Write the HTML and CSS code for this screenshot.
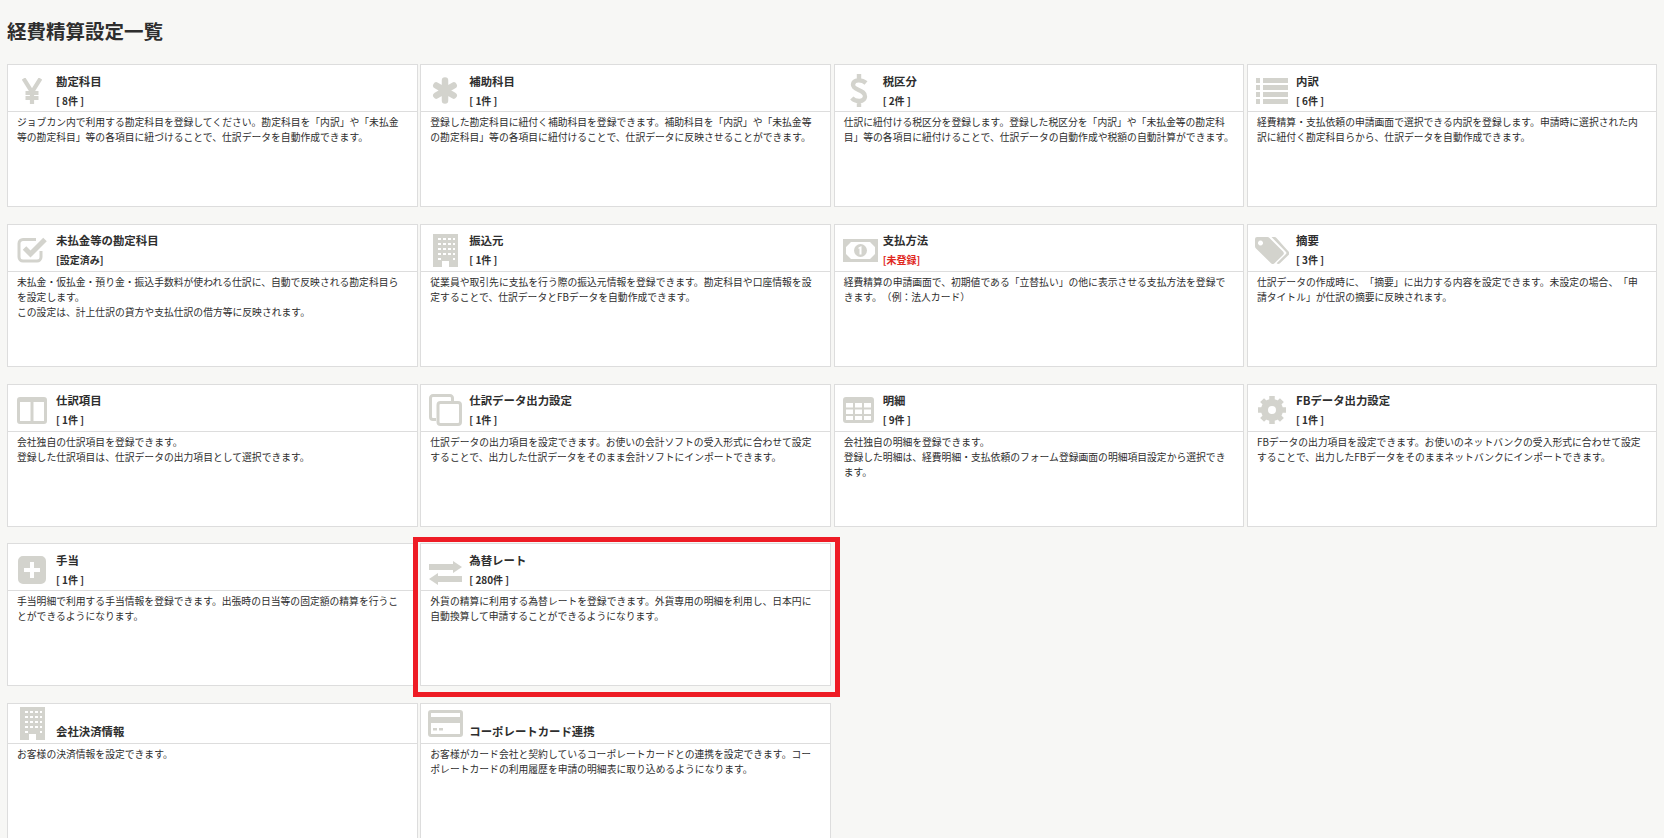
FILE: index.html
```html
<!DOCTYPE html>
<html lang="ja">
<head>
  <meta charset="UTF-8" />
  <title>経費精算設定一覧</title>
  <link rel="stylesheet" href="styles.css">
</head>
<body>
  <h1>経費精算設定一覧</h1>

  <div class="grid">
    <div class="card">
      <div class="card-head">
        <div class="ico">
          <svg width="20" height="26" viewBox="0 0 20 26"><path class="line" d="M1.500 0.500l8.500 13.500 8.500-13.500M10 13v13M3.500 15h13M3.500 20h13" stroke-width="4.200"/></svg>
        </div>
        <div>
          <div class="name">勘定科目</div>
          <div class="count">[ 8件 ]</div>
        </div>
      </div>
      <p class="desc">ジョブカン内で利用する勘定科目を登録してください。勘定科目を「内訳」や「未払金等の勘定科目」等の各項目に紐づけることで、仕訳データを自動作成できます。</p>
    </div>

    <div class="card">
      <div class="card-head">
        <div class="ico">
          <svg width="26" height="27" viewBox="0 0 26 27"><path class="line round" d="M13 3.500v20M4.300 8.500l17.400 10M21.700 8.500l-17.400 10" stroke-width="6.500"/></svg>
        </div>
        <div>
          <div class="name">補助科目</div>
          <div class="count">[ 1件 ]</div>
        </div>
      </div>
      <p class="desc">登録した勘定科目に紐付く補助科目を登録できます。補助科目を「内訳」や「未払金等の勘定科目」等の各項目に紐付けることで、仕訳データに反映させることができます。</p>
    </div>

    <div class="card">
      <div class="card-head">
        <div class="ico">
          <svg width="18" height="33" viewBox="0 0 18 33"><path class="line" d="M16 9C12 5.500 3.500 5 3 10.500C2.500 16.500 15.500 15.500 15 22.500C14.500 28.500 5.500 28 1.800 24M9 0v6M9 27v6" stroke-width="4.400"/></svg>
        </div>
        <div>
          <div class="name">税区分</div>
          <div class="count">[ 2件 ]</div>
        </div>
      </div>
      <p class="desc">仕訳に紐付ける税区分を登録します。登録した税区分を「内訳」や「未払金等の勘定科目」等の各項目に紐付けることで、仕訳データの自動作成や税額の自動計算ができます。</p>
    </div>

    <div class="card">
      <div class="card-head">
        <div class="ico">
          <svg width="32" height="26" viewBox="0 0 32 26"><path class="fill" d="M0 0h4v5H0zM7 0h25v5H7zM0 7h4v5H0zM7 7h25v5H7zM0 14h4v5H0zM7 14h25v5H7zM0 21h4v5H0zM7 21h25v5H7z"/></svg>
        </div>
        <div>
          <div class="name">内訳</div>
          <div class="count">[ 6件 ]</div>
        </div>
      </div>
      <p class="desc">経費精算・支払依頼の申請画面で選択できる内訳を登録します。申請時に選択された内訳に紐付く勘定科目らから、仕訳データを自動作成できます。</p>
    </div>

    <div class="card">
      <div class="card-head">
        <div class="ico">
          <svg width="31" height="26" viewBox="0 0 31 26"><path class="line" d="M19 2.500H6A4 4 0 0 0 2 6.500V20A4 4 0 0 0 6 24H20A4 4 0 0 0 24 20V14" stroke-width="3"/><path class="line" d="M7.500 11l6 6L28 2.500" stroke-width="5"/></svg>
        </div>
        <div>
          <div class="name">未払金等の勘定科目</div>
          <div class="count">[設定済み]</div>
        </div>
      </div>
      <p class="desc">未払金・仮払金・預り金・振込手数料が使われる仕訳に、自動で反映される勘定科目らを設定します。<br>この設定は、計上仕訳の貸方や支払仕訳の借方等に反映されます。</p>
    </div>

    <div class="card">
      <div class="card-head">
        <div class="ico">
          <svg width="25" height="33" viewBox="0 0 25 33"><path class="fill" fill-rule="evenodd" d="M0 0h25v33H0zM5 4v2h3V4zM10 4v2h3V4zM15 4v2h3V4zM20 4v2h2V4zM5 9v2h3V9zM10 9v2h3V9zM15 9v2h3V9zM20 9v2h2V9zM5 14v2h3v-2zM10 14v2h3v-2zM15 14v2h3v-2zM20 14v2h2v-2zM5 19v2h3v-2zM10 19v2h3v-2zM15 19v2h3v-2zM20 19v2h2v-2zM5 24v2h3v-2zM20 24v2h2v-2zM9 27v6h7v-6z"/></svg>
        </div>
        <div>
          <div class="name">振込元</div>
          <div class="count">[ 1件 ]</div>
        </div>
      </div>
      <p class="desc">従業員や取引先に支払を行う際の振込元情報を登録できます。勘定科目や口座情報を設定することで、仕訳データとFBデータを自動作成できます。</p>
    </div>

    <div class="card">
      <div class="card-head">
        <div class="ico">
          <svg class="nudge-right" width="35" height="23" viewBox="0 0 35 23"><path class="fill" fill-rule="evenodd" d="M0 0h35v23H0zM8 3L3 8v7l5 5h19l5-5V8l-5-5z"/><circle class="fill" cx="17.500" cy="11.500" r="6.500"/><path class="mark" d="M15.500 8.500l3-1.500v8.500h-2V9.500l-1 .5z"/></svg>
        </div>
        <div>
          <div class="name">支払方法</div>
          <div class="count unset">[未登録]</div>
        </div>
      </div>
      <p class="desc spaced">経費精算の申請画面で、初期値である「立替払い」の他に表示させる支払方法を登録できます。（例：法人カード）</p>
    </div>

    <div class="card">
      <div class="card-head">
        <div class="ico">
          <svg width="34" height="27" viewBox="0 0 34 27"><path class="fill" fill-rule="evenodd" d="M2 0h10.500a3 3 0 0 1 2 .9L28 14.500a2.500 2.500 0 0 1 0 3.500l-8.500 8.200a2.500 2.500 0 0 1-3.500 0L1 11.500a3 3 0 0 1-1-2.200V2a2 2 0 0 1 2-2zM5.500 3.500a2.500 2.500 0 1 0 .01 0z"/><path class="fill" d="M16.500 0h3a3 3 0 0 1 2 .9L33.500 14.500a2.500 2.500 0 0 1 0 3.500l-8.500 8.200a2.500 2.500 0 0 1-3.400 0L31 17a1.500 1.500 0 0 0 0-2z"/></svg>
        </div>
        <div>
          <div class="name">摘要</div>
          <div class="count">[ 3件 ]</div>
        </div>
      </div>
      <p class="desc spaced">仕訳データの作成時に、「摘要」に出力する内容を設定できます。未設定の場合、「申請タイトル」が仕訳の摘要に反映されます。</p>
    </div>

    <div class="card">
      <div class="card-head">
        <div class="ico">
          <svg width="30" height="27" viewBox="0 0 30 27"><path class="fill" fill-rule="evenodd" d="M3 0h24a3 3 0 0 1 3 3v21a3 3 0 0 1-3 3H3a3 3 0 0 1-3-3V3a3 3 0 0 1 3-3zM3 5v19h10.500V5zM16.500 5v19H27V5z"/></svg>
        </div>
        <div>
          <div class="name">仕訳項目</div>
          <div class="count">[ 1件 ]</div>
        </div>
      </div>
      <p class="desc">会社独自の仕訳項目を登録できます。<br>登録した仕訳項目は、仕訳データの出力項目として選択できます。</p>
    </div>

    <div class="card">
      <div class="card-head">
        <div class="ico">
          <svg width="33" height="32" viewBox="0 0 33 32"><path class="line" d="M7 25.500H4A2.500 2.500 0 0 1 1.500 23V4A2.500 2.500 0 0 1 4 1.500H21A2.500 2.500 0 0 1 23.500 4V7" stroke-width="3"/><rect class="line" x="9" y="8.500" width="22.500" height="22" rx="2.500" stroke-width="3"/></svg>
        </div>
        <div>
          <div class="name">仕訳データ出力設定</div>
          <div class="count">[ 1件 ]</div>
        </div>
      </div>
      <p class="desc">仕訳データの出力項目を設定できます。お使いの会計ソフトの受入形式に合わせて設定することで、出力した仕訳データをそのまま会計ソフトにインポートできます。</p>
    </div>

    <div class="card">
      <div class="card-head">
        <div class="ico">
          <svg width="31" height="26" viewBox="0 0 31 26"><path class="fill" fill-rule="evenodd" d="M3 0h25a3 3 0 0 1 3 3v20a3 3 0 0 1-3 3H3a3 3 0 0 1-3-3V3a3 3 0 0 1 3-3zM3 6v4.500h7V6zM12 6v4.500h7V6zM21 6v4.500h7V6zM3 12.500V17h7v-4.500zM12 12.500V17h7v-4.500zM21 12.500V17h7v-4.500zM3 19v4h7v-4zM12 19v4h7v-4zM21 19v4h7v-4z"/></svg>
        </div>
        <div>
          <div class="name">明細</div>
          <div class="count">[ 9件 ]</div>
        </div>
      </div>
      <p class="desc">会社独自の明細を登録できます。<br>登録した明細は、経費明細・支払依頼のフォーム登録画面の明細項目設定から選択できます。</p>
    </div>

    <div class="card">
      <div class="card-head">
        <div class="ico">
          <svg width="28" height="28" viewBox="0 0 28 28"><circle class="line" cx="14" cy="14" r="7.500" stroke-width="7"/><path class="line" d="M14 0v6M14 22v6M0 14h6M22 14h6M4.100 4.100l4.200 4.200M19.700 19.700l4.200 4.200M23.900 4.100l-4.200 4.200M8.300 19.700l-4.200 4.200" stroke-width="5.500"/></svg>
        </div>
        <div>
          <div class="name">FBデータ出力設定</div>
          <div class="count">[ 1件 ]</div>
        </div>
      </div>
      <p class="desc">FBデータの出力項目を設定できます。お使いのネットバンクの受入形式に合わせて設定することで、出力したFBデータをそのままネットバンクにインポートできます。</p>
    </div>

    <div class="card">
      <div class="card-head">
        <div class="ico">
          <svg width="28" height="28" viewBox="0 0 28 28"><path class="fill" fill-rule="evenodd" d="M5 0h18a5 5 0 0 1 5 5v18a5 5 0 0 1-5 5H5a5 5 0 0 1-5-5V5a5 5 0 0 1 5-5zM12 6v6H6v4h6v6h4v-6h6v-4h-6V6z"/></svg>
        </div>
        <div>
          <div class="name">手当</div>
          <div class="count">[ 1件 ]</div>
        </div>
      </div>
      <p class="desc">手当明細で利用する手当情報を登録できます。出張時の日当等の固定額の精算を行うことができるようになります。</p>
    </div>

    <div class="card">
      <div class="card-head">
        <div class="ico">
          <svg class="nudge-low" width="33" height="24" viewBox="0 0 33 24"><path class="fill" d="M0 3h24V0l9 6-9 6V9H0zM33 15H9v-3l-9 6 9 6v-3h24z"/></svg>
        </div>
        <div>
          <div class="name">為替レート</div>
          <div class="count">[ 280件 ]</div>
        </div>
      </div>
      <p class="desc">外貨の精算に利用する為替レートを登録できます。外貨専用の明細を利用し、日本円に自動換算して申請することができるようになります。</p>
      <div class="redbox"></div>
    </div>

    <div class="spacer"></div>
    <div class="spacer"></div>

    <div class="card">
      <div class="card-head short">
        <div class="ico">
          <svg width="25" height="33" viewBox="0 0 25 33"><path class="fill" fill-rule="evenodd" d="M0 0h25v33H0zM5 4v2h3V4zM10 4v2h3V4zM15 4v2h3V4zM20 4v2h2V4zM5 9v2h3V9zM10 9v2h3V9zM15 9v2h3V9zM20 9v2h2V9zM5 14v2h3v-2zM10 14v2h3v-2zM15 14v2h3v-2zM20 14v2h2v-2zM5 19v2h3v-2zM10 19v2h3v-2zM15 19v2h3v-2zM20 19v2h2v-2zM5 24v2h3v-2zM20 24v2h2v-2zM9 27v6h7v-6z"/></svg>
        </div>
        <div class="name">会社決済情報</div>
      </div>
      <p class="desc">お客様の決済情報を設定できます。</p>
    </div>

    <div class="card">
      <div class="card-head short">
        <div class="ico">
          <svg width="35" height="27" viewBox="0 0 35 27"><path class="fill" fill-rule="evenodd" d="M3 0h29a3 3 0 0 1 3 3v21a3 3 0 0 1-3 3H3a3 3 0 0 1-3-3V3a3 3 0 0 1 3-3zM3 3v4h29V3zM3 13v11h29V13zM5 18h4v2.500H5zM11 18h4v2.500h-4z"/></svg>
        </div>
        <div class="name">コーポレートカード連携</div>
      </div>
      <p class="desc">お客様がカード会社と契約しているコーポレートカードとの連携を設定できます。コー<br>ポレートカードの利用履歴を申請の明細表に取り込めるようになります。</p>
    </div>
  </div>
</body>
</html>
```

FILE: styles.css
```css
body {
  font-family: "Noto Sans CJK JP", "Noto Sans", sans-serif;
  background-color: #f7f7f5;
  color: #2e2e2e;
  margin: 0;
  padding: 0 7px;
  height: 838px;
  overflow: hidden;
}
h1 {
  font-size: 19.5px;
  font-weight: 700;
  line-height: 28px;
  margin: 0;
  padding: 17px 0 19px;
}
.grid {
  display: grid;
  grid-template-columns: repeat(4, 410.5px);
  column-gap: 2.83px;
  row-gap: 16.75px;
}
.card {
  position: relative;
  box-sizing: border-box;
  height: 143px;
  background: #fff;
  border: 1px solid #ddd;
}
.card-head {
  display: flex;
  align-items: center;
  box-sizing: border-box;
  height: 47px;
  padding-top: 5px;
  border-bottom: 1px solid #ddd;
}
.card-head.short {
  height: 40px;
  padding-top: 0;
  align-items: flex-end;
}
.ico {
  flex: none;
  display: flex;
  align-items: center;
  justify-content: center;
  width: 48px;
  height: 34px;
}
.short .ico {
  margin: 0 0 3px;
}
.ico svg {
  display: block;
}
.ico .nudge-low {
  margin-top: 7px;
}
.ico .nudge-right {
  margin-left: 4px;
}
.fill {
  fill: #d3d3cd;
}
.line {
  fill: none;
  stroke: #d3d3cd;
}
.round {
  stroke-linecap: round;
}
.mark {
  fill: #fff;
}
.name {
  font-size: 11.4px;
  font-weight: 700;
  line-height: 19px;
}
.short .name {
  line-height: 22px;
  margin-bottom: 1px;
}
.count {
  font-size: 10px;
  font-weight: 700;
  line-height: 19px;
}
.unset {
  color: #e0281e;
}
.desc {
  font-size: 9.8px;
  line-height: 15.2px;
  margin: 0;
  padding: 3px 9px;
}
.spaced {
  text-spacing-trim: space-all;
}
.redbox {
  position: absolute;
  top: -7px;
  left: -8px;
  right: -10px;
  bottom: -12px;
  border: 5px solid #ee1c25;
  pointer-events: none;
}
```
